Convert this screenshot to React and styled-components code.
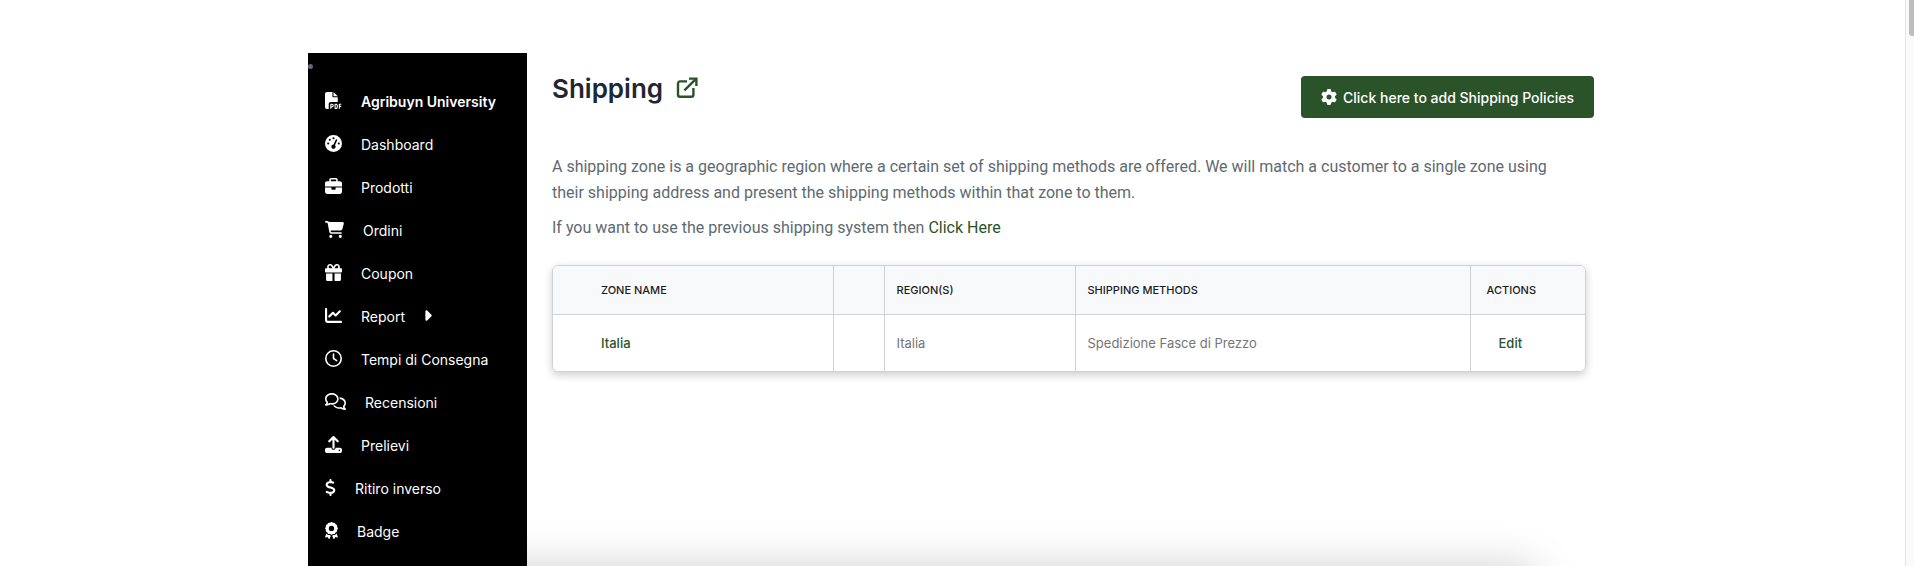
import styled, { createGlobalStyle } from 'styled-components'
import {
    FaAward, FaBriefcase, FaCaretRight, FaCartShopping, FaChartLine, FaDollarSign,
    FaFilePdf, FaGaugeHigh, FaGear, FaGift, FaRegClock, FaRegComments, FaUpload
} from 'react-icons/fa6'


const menu = [
    { label: 'Agribuyn University', Icon: FaFilePdf, strong: true },
    { label: 'Dashboard', Icon: FaGaugeHigh },
    { label: 'Prodotti', Icon: FaBriefcase },
    { label: 'Ordini', Icon: FaCartShopping, iconWidth: '19px' },
    { label: 'Coupon', Icon: FaGift },
    { label: 'Report', Icon: FaChartLine, submenu: true },
    { label: 'Tempi di Consegna', Icon: FaRegClock },
    { label: 'Recensioni', Icon: FaRegComments, iconWidth: '21px' },
    { label: 'Prelievi', Icon: FaUpload },
    { label: 'Ritiro inverso', Icon: FaDollarSign, iconWidth: '11px' },
    { label: 'Badge', Icon: FaAward, iconWidth: '13px' },
]

const zones = [
    { name: 'Italia', region: 'Italia', methods: 'Spedizione Fasce di Prezzo' },
]

const ExternalIcon = () => (
    <svg viewBox="0 0 22 22" fill="none" stroke="currentColor" strokeWidth="2.4">
        <path d="M11 4.4H4a2 2 0 0 0-2 2v11.4a2 2 0 0 0 2 2h11.4a2 2 0 0 0 2-2V11" />
        <path d="M8.4 13.4L20 1.8" />
        <path d="M13 1.6h7.4V9" />
    </svg>
)

const App = () => {
    return (
        <>
            <GlobalStyle />
            <Layout>
                <Page>
                    <Container>
                        <Sidebar>
                            <Marker />
                            <Menu>
                                {menu.map(({ label, Icon, iconWidth, strong, submenu }) => (
                                    <li key={label}>
                                        <MenuLink href="#" $strong={strong}>
                                            <MenuIcon as={Icon} $width={iconWidth} />
                                            <span>{label}</span>
                                            {submenu && <Caret />}
                                        </MenuLink>
                                    </li>
                                ))}
                            </Menu>
                        </Sidebar>
                        <Main>
                            <Header>
                                <Title>
                                    Shipping
                                    <TitleLink href="#" aria-label="Shipping"><ExternalIcon /></TitleLink>
                                </Title>
                                <Button type="button">
                                    <FaGear />
                                    Click here to add Shipping Policies
                                </Button>
                            </Header>
                            <Content>
                                <Text>
                                    A shipping zone is a geographic region where a certain set of shipping methods are offered.
                                    We will match a customer to a single zone using their shipping address and present the
                                    shipping methods within that zone to them.
                                </Text>
                                <Text>
                                    If you want to use the previous shipping system then <TextLink href="#">Click Here</TextLink>
                                </Text>
                                <TableBox>
                                    <Table>
                                        <colgroup>
                                            <Col $width="280px" />
                                            <Col $width="51px" />
                                            <Col $width="191px" />
                                            <Col />
                                            <Col $width="115px" />
                                        </colgroup>
                                        <thead>
                                            <tr>
                                                <Th $indent="48px">Zone Name</Th>
                                                <Th />
                                                <Th>Region(s)</Th>
                                                <Th>Shipping Methods</Th>
                                                <Th $indent="16px">Actions</Th>
                                            </tr>
                                        </thead>
                                        <tbody>
                                            {zones.map((zone) => (
                                                <tr key={zone.name}>
                                                    <Td $indent="48px"><CellLink href="#">{zone.name}</CellLink></Td>
                                                    <Td />
                                                    <Td>{zone.region}</Td>
                                                    <Td>{zone.methods}</Td>
                                                    <Td $indent="28px"><CellLink href="#">Edit</CellLink></Td>
                                                </tr>
                                            ))}
                                        </tbody>
                                    </Table>
                                </TableBox>
                            </Content>
                        </Main>
                    </Container>
                    <BottomShadow />
                </Page>
                <ScrollTrack>
                    <ScrollThumb />
                </ScrollTrack>
            </Layout>
        </>
    )
}

export default App

const GlobalStyle = createGlobalStyle`
* {
  box-sizing: border-box;
}
body {
  margin: 0;
  background: #fff;
  font-family: Inter, "Liberation Sans", sans-serif;
  color: #5e6a71;
}
a {
  text-decoration: none;
}
`
const Layout = styled.div`
display: flex;
height: 100vh;
overflow: hidden;
`
const Page = styled.div`
flex: 1;
min-width: 0;
display: flex;
position: relative;
overflow: hidden;
padding-top: 53px;
`
const Container = styled.div`
width: 100%;
max-width: 1289px;
margin: 0 auto;
display: flex;
`
const Sidebar = styled.nav`
width: 219px;
flex-shrink: 0;
padding-top: 11px;
background: #000;
`
const Marker = styled.div`
width: 5px;
height: 5px;
border-radius: 50%;
background: #5e6a71;
`
const Menu = styled.ul`
list-style: none;
margin: 0;
padding: 11px 0 0;
`
const MenuLink = styled.a`
display: flex;
align-items: center;
height: 43px;
padding-left: 17px;
color: #fff;
font-size: 14px;
font-weight: ${({ $strong }) => ($strong ? 600 : 400)};
`
const MenuIcon = styled.svg`
flex-shrink: 0;
width: ${({ $width }) => $width || '17px'};
height: 17px;
margin: 0 19px 3px 0;
`
const Caret = styled(FaCaretRight)`
width: 9px;
height: 17px;
margin: 0 0 3px 18px;
`
const Main = styled.main`
flex: 1;
min-width: 0;
padding: 23px 3px 0 25px;
`
const Header = styled.header`
display: flex;
justify-content: space-between;
height: 78px;
`
const Title = styled.h1`
display: flex;
align-items: center;
gap: 13px;
height: 24px;
margin: 0;
color: #1e2732;
font-size: 26px;
font-weight: 600;
`
const TitleLink = styled.a`
display: flex;
color: #2b5329;
svg {
  width: 22px;
  height: 22px;
}
`
const Button = styled.button`
display: flex;
align-items: center;
gap: 6px;
height: 42px;
padding: 0 20px;
border: 0;
border-radius: 4px;
background: #2b5329;
color: #fff;
font-family: inherit;
font-size: 14px;
font-weight: 500;
svg {
  width: 16px;
  height: 16px;
}
`
const Content = styled.section`
padding-right: 8px;
`
const Text = styled.p`
margin: 0 0 9px;
padding-right: 16px;
font-family: Roboto, Inter, sans-serif;
font-size: 16px;
line-height: 26px;
`
const TextLink = styled.a`
color: #2b5329;
`
const TableBox = styled.div`
margin-top: 24px;
border: 1px solid #d0d3d6;
border-radius: 6px;
box-shadow: 0 3px 8px rgba(0, 0, 0, 0.2);
overflow: hidden;
`
const Table = styled.table`
width: 100%;
border-collapse: collapse;
table-layout: fixed;
`
const Col = styled.col`
width: ${({ $width }) => $width || 'auto'};
`
const Th = styled.th`
height: 48px;
padding: 0 0 0 ${({ $indent }) => $indent || '12px'};
background: #f8f9fb;
border-bottom: 1px solid #d0d3d6;
color: #1a1c1f;
font-size: 11px;
font-weight: 500;
text-align: left;
text-transform: uppercase;
&:not(:last-child) {
  border-right: 1px solid #d0d3d6;
}
`
const Td = styled.td`
height: 57px;
padding: 0 0 0 ${({ $indent }) => $indent || '12px'};
color: #757575;
font-size: 13px;
&:not(:last-child) {
  border-right: 1px solid #d0d3d6;
}
`
const CellLink = styled.a`
color: #2b5329;
font-weight: 500;
`
const BottomShadow = styled.div`
position: absolute;
top: 100%;
left: 370px;
right: 370px;
height: 100px;
box-shadow: 0 0 44px rgba(0, 0, 0, 0.18);
`
const ScrollTrack = styled.div`
display: flex;
justify-content: flex-end;
width: 9px;
border-left: 1px solid #e4e4e4;
background: #fafafa;
`
const ScrollThumb = styled.div`
width: 5px;
height: 36px;
border-radius: 0 0 0 3px;
background: #bdbdbd;
`
